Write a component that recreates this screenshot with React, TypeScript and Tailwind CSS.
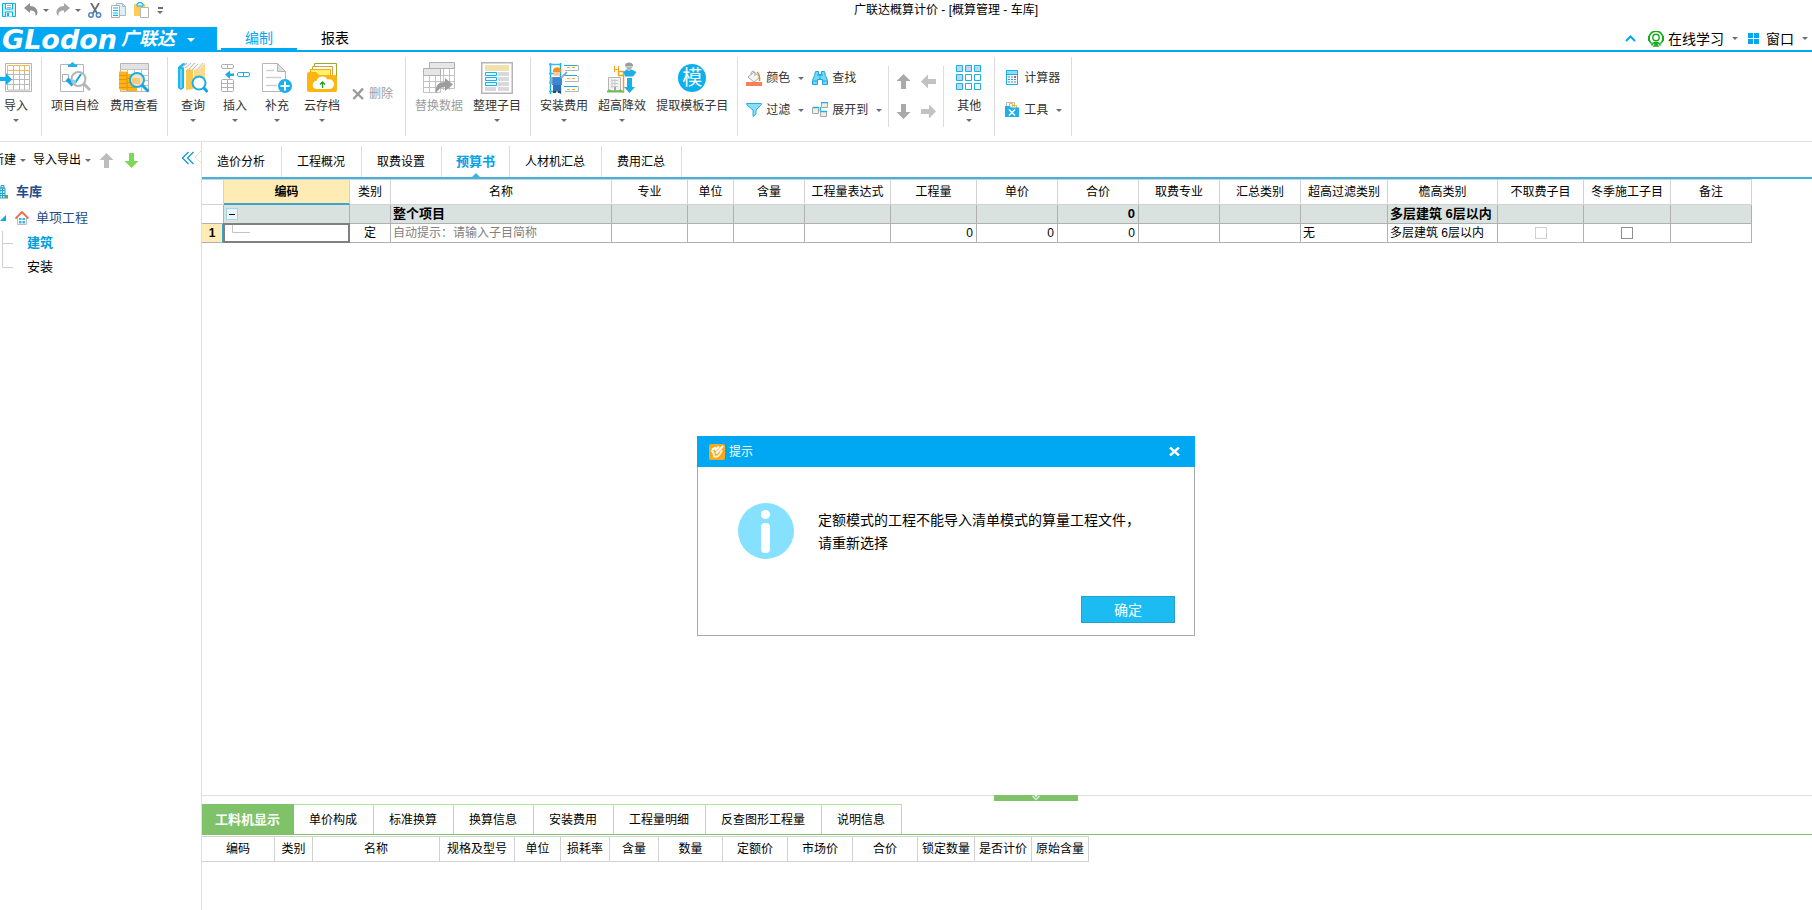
import React from 'react';
import clsx from 'clsx';

type ArtProps = { w: number; h: number; children: React.ReactNode };

function Art({ w, h, children }: ArtProps) {
  return (
    <svg width={w} height={h} viewBox={`0 0 ${w} ${h}`} fill="none" className="block shrink-0" aria-hidden="true">
      {children}
    </svg>
  );
}

function Caret({ className = 'text-[#6c6c7c]' }: { className?: string }) {
  return (
    <svg width="6" height="3" viewBox="0 0 6 3" className={clsx('block shrink-0', className)} aria-hidden="true">
      <path d="M0 0h6L3 3z" fill="currentColor" />
    </svg>
  );
}

/* ---------- quick access icons ---------- */

const SaveIcon = () => (
  <Art w={14} h={14}>
    <path d="M.5.5h13v13H.5z" fill="#c9effb" stroke="#0fb0e6" />
    <path d="M3.500 1v5h7V1M3.500 13.500V9h7v4.500" fill="#fff" stroke="#0fb0e6" />
    <path d="M5 2.500h4M5 4.500h4" stroke="#a9a9a9" />
    <path d="M5 10h2v3H5z" fill="#0fb0e6" />
  </Art>
);

const UndoIcon = () => (
  <Art w={14} h={14}>
    <path d="M0 5l6-5v3c5 0 7.500 3 7.500 6.500 0 2-1 3-2 3.500C12 9 10 7.500 6 7.500V10z" fill="#8f8f8f" />
  </Art>
);

const RedoIcon = () => (
  <Art w={14} h={14}>
    <path d="M14 5L8 0v3C3 3 .5 6 .5 9.500c0 2 1 3 2 3.500C2 9 4 7.500 8 7.500V10z" fill="#a6a6a6" />
  </Art>
);

const CutIcon = () => (
  <Art w={14} h={15}>
    <path d="M3 0l6.500 11M11 0L4.500 11" stroke="#6e6e6e" strokeWidth="1.800" />
    <circle cx="3" cy="12" r="2.200" stroke="#4b86c6" strokeWidth="1.500" />
    <circle cx="10.500" cy="12" r="2.200" stroke="#4b86c6" strokeWidth="1.500" />
  </Art>
);

const CopyIcon = () => (
  <Art w={15} h={15}>
    <path d="M5.500.5h6l3 3v9h-9z" fill="#d9f2fb" stroke="#b5b5b5" />
    <path d="M11.500.5v3h3" stroke="#b5b5b5" />
    <path d="M.5 2.500h8v12h-8z" fill="#fff" stroke="#b0b0b0" />
    <path d="M2 5h5M2 7.500h5M2 10h5M2 12.300h5" stroke="#12b2ea" strokeWidth="1.200" />
  </Art>
);

const PasteIcon = () => (
  <Art w={15} h={16}>
    <path d="M0 2h11v12H0z" fill="#ffce55" />
    <path d="M3 4V1.500h1.500V.5h3v1H9V4z" fill="#d5f1fb" stroke="#12b2ea" />
    <path d="M6.500 5.500h8v10h-8z" fill="#fff" stroke="#b5b5b5" />
  </Art>
);

/* ---------- large ribbon icons ---------- */

const ImportIcon = () => (
  <Art w={32} h={32}>
    <path d="M5.500 1.500h26v28h-26z" fill="#fff" stroke="#b5b5b5" />
    <path d="M7.500 8v20h22V8M13.500 8v20M19.500 8v20M24.500 8v20M7.500 12.500h22M7.500 17.500h22M7.500 22.500h22" stroke="#b9b9b9" />
    <path d="M7.500 3.500h22v5h-22zM13.500 3.500v5M19.500 3.500v5M24.500 3.500v5" stroke="#f5b955" />
    <path d="M0 15h6v-4l6 6.500L6 23v-4H0z" fill="#10b0ea" />
  </Art>
);

const SelfCheckIcon = () => (
  <Art w={32} h={32}>
    <path d="M1.500 2.500h23v27h-23z" fill="#fff" stroke="#b5b5b5" />
    <path d="M9 5V2.500h2.500C12-.5 15-.5 15.500 2.500H18V5z" fill="#18b4ea" />
    <path d="M3.500 12.500h6v7h-6z" stroke="#b0b0b0" />
    <path d="M8 17l6 6" stroke="#10a6e6" strokeWidth="4" />
    <circle cx="19.500" cy="17" r="7" fill="#fff" stroke="#b5b5b5" strokeWidth="2" />
    <path d="M25 22l6 6" stroke="#b5b5b5" strokeWidth="3" />
    <path d="M16 21l6-9" stroke="#10a6e6" strokeWidth="2" />
    <path d="M14 18l3 3" stroke="#7ccff0" strokeWidth="2" />
  </Art>
);

const CostViewIcon = () => (
  <Art w={32} h={32}>
    <path d="M2.500 1.500h28v28h-28z" fill="#fff" stroke="#b5b5b5" />
    <path d="M3 2h27v5H3z" fill="#e2e2e2" />
    <path d="M2.500 7.500h28M9.500 7v22M16.500 7v22M23.500 7v22M3 13.500h27M3 18.500h27M3 23.500h27" stroke="#c4c4c4" />
    <path d="M1 9.500h8v19H4l-3-1.500zM9 12h10v17H9z" fill="#fdb515" />
    <path d="M1 13.500h8M1 17.500h8M1 21.500h8M1 25.500h8M9 16.500h6M9 20.500h6M9 25.500h9M9 10v19" stroke="#e8930c" />
    <circle cx="19" cy="18" r="7" fill="#f9e3c8" stroke="#18b0e6" strokeWidth="2" />
    <path d="M14 16h8v6h-8z" fill="#fbc97c" />
    <path d="M24 23l6.500 6.500" stroke="#18a4de" strokeWidth="3" />
  </Art>
);

const QueryIcon = () => (
  <Art w={30} h={32}>
    <path d="M0 5l5-4 4 1-3 4v20l-3 2-3-2z" fill="#19b7ea" />
    <path d="M3 7v19" stroke="#c9effb" />
    <path d="M8 8l8-7 4 1-5 6v19l-7 1z" fill="#fbc84f" />
    <path d="M16 8l8-7h3v20l-11 6z" fill="#fdd98a" />
    <path d="M4 5l6-4 5 1-5 5zM10 7l7-6 4 1-6 6zM17 7l6-6 4 0-7 7z" fill="#f7f7f7" />
    <path d="M4 5l5-4M7 6l6-5M11 7l6-6M14 8l6-6M19 8l6-7" stroke="#bdbdbd" />
    <circle cx="21" cy="21" r="6.500" fill="#fff" stroke="#18b0e6" strokeWidth="2" />
    <path d="M25.500 25.500l4 4.500" stroke="#18a4de" strokeWidth="3" />
  </Art>
);

const InsertIcon = () => (
  <Art w={30} h={32}>
    <rect x="1.500" y="2.500" width="12" height="4" rx="1.500" stroke="#b0b0b0" />
    <path d="M7.500 2.500v4" stroke="#b0b0b0" />
    <rect x="17.500" y="10.500" width="12" height="4" rx="1.500" stroke="#16b2e8" />
    <path d="M23.500 10.500v4" stroke="#16b2e8" />
    <path d="M5 12.500l5-4v3h4v2.500h-4v3z" fill="#16aee6" />
    <rect x="1.500" y="17.500" width="12" height="12" rx="1" stroke="#b0b0b0" />
    <path d="M7.500 17.500v12M1.500 21.500h12M1.500 25.500h12" stroke="#b0b0b0" />
  </Art>
);

const SupplementIcon = () => (
  <Art w={30} h={32}>
    <path d="M.5 1.500h15l8 8v20H.5z" fill="#fff" stroke="#b5b5b5" />
    <path d="M15.500 1.500v8h8z" fill="#e0e0e0" stroke="#b5b5b5" />
    <path d="M4 8.500h8M4 15.500h15M4 23.500h11" stroke="#d0d0d0" strokeWidth="1.500" />
    <circle cx="23" cy="24" r="7" fill="#17b0ea" />
    <path d="M23 19.500v9M18.500 24h9" stroke="#fff" strokeWidth="2" />
  </Art>
);

const CloudIcon = () => (
  <Art w={36} h={32}>
    <path d="M10.500 1.500h22v14h-22z" fill="#fff" stroke="#8fae2b" />
    <path d="M8.500 4.500h20v11h-20z" fill="#fff" stroke="#d2a33c" />
    <path d="M6.500 7.500h20v10h-20z" fill="#fff36a" stroke="#f5a623" />
    <path d="M3 12q0-2 2-2h7l3 3h16q2 0 2 2v13q0 2-2 2H5q-2 0-2-2z" fill="#feb50f" />
    <path d="M13 27a4 4 0 01-.500-8 6 6 0 0111-1.500 4.800 4.800 0 013 9.500z" fill="#fff" />
    <path d="M18.500 26v-6M16 22.500l2.500-2.500 2.500 2.500" stroke="#1da01d" strokeWidth="1.300" />
  </Art>
);

const DeleteIcon = () => (
  <Art w={12} h={12}>
    <path d="M1 1.500L11 11M11 .5L1.500 11" stroke="#9a9a9a" strokeWidth="2.400" />
  </Art>
);

const ReplaceIcon = () => (
  <Art w={32} h={32}>
    <path d="M6.500 6.500v20h25v-20M14.500 6v22M20.500 6v22M26.500 6v22M6 13.500h25M6 19.500h25" stroke="#c2c2c2" />
    <path d="M6.500.5h25v6h-25z" fill="#e6e6e6" stroke="#b0b0b0" />
    <path d="M.5 13.500h17v17H.5z" fill="#fff" stroke="#c2c2c2" />
    <path d="M6.500 13v17M12.500 13v17M0 19.500h17M0 25.500h17" stroke="#c2c2c2" />
    <path d="M.5 6.500h17v7H.5z" fill="#e6e6e6" stroke="#b0b0b0" />
    <path d="M13 31c-1-8 3-11 9-11v-4l8 6.500-8 6.500v-4c-4 0-6 2-9 6z" fill="#9d9d9d" />
  </Art>
);

const ArrangeIcon = () => (
  <Art w={32} h={32}>
    <path d="M.75.75h30.500v30.500H.75z" fill="#fff" stroke="#b5b5b5" strokeWidth="1.500" />
    <path d="M4 3h24v6H4z" fill="#f3e2ae" />
    <path d="M17 10h11v4H17zM17 15h11v4H17zM17 20h11v4H17zM17 25h11v4H17zM4 25h11v4H4z" fill="#d9d8dc" />
    <path d="M4.500 10.500h11v3h-11zM4.500 15.500h11v3h-11zM4.500 20.500h11v3h-11z" fill="#e6f7fd" stroke="#16b2e8" />
  </Art>
);

const InstallIcon = () => (
  <Art w={32} h={32}>
    <path d="M2.500 1v31M12.500 1v31" stroke="#18aee2" strokeWidth="1.500" />
    <path d="M1 2.500h11M1 11.500h11M1 20.500h11M1 29.500h11" stroke="#35bde8" strokeWidth="1.500" />
    <path d="M16 3.500h13M16 13.500h13M16 24.500h13" stroke="#18aee2" />
    <path d="M29 3.500h1.500v5H17M29 14.500h1.500v5H17M29 24.500h1.500v5H17" stroke="#b5b5b5" />
    <path d="M19 5.500h3M24 5.500h3M19 16.500h3M24 16.500h3M19 27.500h3M24 27.500h3" stroke="#f5a623" />
    <path d="M5 9c0-5 8-5 8 0v1H5z" fill="#f5921f" />
    <path d="M6 10h6v4H6z" fill="#f9c9a0" />
    <path d="M4 15h10v8H4z" fill="#3b87d8" />
    <path d="M5 23h8v6H5z" fill="#2e70bd" />
    <path d="M13 16l6-6M3.500 15v7" stroke="#9dadba" strokeWidth="2" />
    <path d="M5 29h3v2H5zM10 29h3v2h-3z" fill="#444" />
  </Art>
);

const HeightIcon = () => (
  <Art w={32} h={32}>
    <path d="M8.500 4v6M12.500 4v6M8.500 7.500h4" stroke="#f5a01c" />
    <path d="M17.500 9v22M17.500 9.500h-5v4h5" stroke="#f5a01c" strokeWidth="1.500" />
    <path d="M2.500 15.500h12v13h-12z" fill="#f2f2f2" stroke="#b5b5b5" />
    <path d="M5 18.500h7M5 21.500h7M5 24.500h7M6 17v9M9 17v9" stroke="#cacaca" />
    <path d="M8 25h2v5H8z" fill="#a5a5a5" />
    <path d="M1 29q2-3 5 0zM12 29q2-3 5 0zM1 29h16v1.500H1z" fill="#6cbf4a" />
    <path d="M19 3.500c0-4 8-4 8 0v1h-8z" fill="#9c9c9c" />
    <path d="M20 5h6q-1 3.500-3 3.500T20 5z" fill="#b5b5b5" />
    <path d="M17.500 10l3-2.500L23 9l2.500-1.500 5 2.500-3.500 4.500h-8z" fill="#18aee8" />
    <path d="M21 16h5v9h3l-5.500 6-5.500-6h3z" fill="#18aee8" />
  </Art>
);

const TemplateIcon = () => (
  <span className="flex h-8 items-center">
    <span className="flex size-7 items-center justify-center rounded-full bg-[#0cb0ec] text-xl leading-5 text-white">模</span>
  </span>
);

const OtherIcon = () => (
  <Art w={26} h={26}>
    <path
      d="M.5.5h6v6h-6zM9.500.5h6v6h-6zM18.500.5h6v6h-6zM.5 9.500h6v6h-6zM.5 18.500h6v6h-6z"
      fill="#bcd8f0"
      stroke="#1bb1e4"
    />
    <path d="M9.500 9.500h6v6h-6zM18.500 9.500h6v6h-6zM9.500 18.500h6v6h-6zM18.500 18.500h6v6h-6z" fill="#fff" stroke="#1bb1e4" />
  </Art>
);

/* ---------- small ribbon icons ---------- */

const ColorIcon = () => (
  <Art w={16} h={16}>
    <path d="M2 7l6-5 6 5-6 5z" fill="#f4f4f4" stroke="#a8a8a8" />
    <path d="M5 5V2.500q2.500-3 4 0V6" stroke="#a8a8a8" />
    <path d="M11 2q3 2 2.500 9" stroke="#e58a22" strokeWidth="1.500" />
    <path d="M0 12h16v4H0z" fill="#fa7e58" />
  </Art>
);

const FilterIcon = () => (
  <Art w={16} h={16}>
    <path d="M.5 1.500h15v1L10 8v4l-3 2.500V8L.5 2.500z" fill="#8edcf6" stroke="#22b2e2" />
  </Art>
);

const FindIcon = () => (
  <Art w={16} h={16}>
    <path d="M3.500 1.500h3v3h3v-3h3l1 4 2 5v4h-5v-5h-5v5h-5v-4l2-5z" fill="#79d6f5" stroke="#19a8dc" />
    <path d="M5 5h6M8 5v4M1 11h4M11 11h4" stroke="#19a8dc" />
  </Art>
);

const ExpandIcon = () => (
  <Art w={16} h={16}>
    <path d="M.5 5.500h6v6h-6zM9.500.5h6v5h-6zM8.500 9.500h6v5h-6z" fill="#f3ece0" stroke="#a8a8a8" />
    <path d="M1 5.500h6M9 .5h7M8 9.500h7" stroke="#19b0e4" strokeWidth="1.500" />
    <path d="M7 8h2M8.500 8V5" stroke="#19b0e4" />
  </Art>
);

const CalcIcon = () => (
  <Art w={16} h={16}>
    <path d="M2.500.5h11v14h-11z" fill="#eefaff" stroke="#19aee4" />
    <path d="M3 1h10v3.500H3z" fill="#8bdcf6" />
    <path d="M3 4.500h10" stroke="#19aee4" />
    <path d="M4 7h2M7 7h2M4 9.500h2M7 9.500h2M10 9.500h2M4 12h2M7 12h2M10 12h2" stroke="#4c8fc7" />
    <path d="M10 7h2" stroke="#f04b3c" strokeWidth="2" />
  </Art>
);

const ToolIcon = () => (
  <Art w={16} h={16}>
    <path d="M2.500 5V.5h8V5" fill="#fff" stroke="#bdbdbd" />
    <path d="M5.500 5V1.500h3V5M9 3.500h3.500V6" stroke="#f0b53c" />
    <path d="M1 4h5l1 1.500h8V15H1z" fill="#1fb0ec" />
    <path d="M5 7.500l6 6M11 7.500l-6 6" stroke="#fff" strokeWidth="1.500" />
  </Art>
);

const arrowTurns = {
  up: '',
  down: 'rotate-180',
  left: '-rotate-90',
  right: 'rotate-90',
};

function BlockArrow({ dir, className = 'text-[#a9a9a9]' }: { dir: keyof typeof arrowTurns; className?: string }) {
  return (
    <svg width="15" height="15" viewBox="0 0 15 15" className={clsx('block', arrowTurns[dir], className)} aria-hidden="true">
      <path d="M7.500 0L14.500 7H10v8H5V7H.5z" fill="currentColor" />
    </svg>
  );
}

/* ---------- ribbon pieces ---------- */

type BigButtonProps = { icon: React.ReactNode; label: string; menu?: boolean; disabled?: boolean };

function BigButton({ icon, label, menu, disabled }: BigButtonProps) {
  return (
    <button
      type="button"
      disabled={disabled}
      className={clsx('flex flex-col items-center pt-[5px]', disabled ? 'text-[#9c9c9c]' : 'text-[#333]')}
    >
      {icon}
      <span className="mt-1 mb-[5px] leading-4 whitespace-nowrap">{label}</span>
      {menu && <Caret />}
    </button>
  );
}

function SmallButton({ icon, label, menu }: BigButtonProps) {
  return (
    <button type="button" className="flex h-8 items-center gap-1 text-[#333]">
      {icon}
      <span className="leading-4 whitespace-nowrap">{label}</span>
      {menu && (
        <span className="pl-1">
          <Caret />
        </span>
      )}
    </button>
  );
}

function Group({ className, children }: { className?: string; children: React.ReactNode }) {
  return <div className={clsx('flex h-[79px] shrink-0 items-start border-r border-[#dcdcdc]', className)}>{children}</div>;
}

function Ribbon() {
  return (
    <div className="flex h-[90px] shrink-0 border-b border-[#dfdfdf] pt-[5px]">
      <Group className="pr-[9px]">
        <BigButton icon={<ImportIcon />} label="导入" menu />
      </Group>
      <Group className="gap-[11px] px-[9px]">
        <BigButton icon={<SelfCheckIcon />} label="项目自检" />
        <BigButton icon={<CostViewIcon />} label="费用查看" />
      </Group>
      <Group className="gap-3 pr-3 pl-[10px]">
        <BigButton icon={<QueryIcon />} label="查询" menu />
        <BigButton icon={<InsertIcon />} label="插入" menu />
        <BigButton icon={<SupplementIcon />} label="补充" menu />
        <BigButton icon={<CloudIcon />} label="云存档" menu />
        <button type="button" disabled className="flex h-[74px] items-center gap-[5px] text-[#9c9c9c]">
          <DeleteIcon />
          <span className="leading-4">删除</span>
        </button>
      </Group>
      <Group className="gap-[10px] px-[9px]">
        <BigButton icon={<ReplaceIcon />} label="替换数据" disabled />
        <BigButton icon={<ArrangeIcon />} label="整理子目" menu />
      </Group>
      <Group className="gap-[10px] px-[9px]">
        <BigButton icon={<InstallIcon />} label="安装费用" menu />
        <BigButton icon={<HeightIcon />} label="超高降效" menu />
        <BigButton icon={<TemplateIcon />} label="提取模板子目" />
      </Group>
      <Group className="pl-2">
        <div className="grid grid-cols-[66px_76px] pt-[5px]">
          <SmallButton icon={<ColorIcon />} label="颜色" menu />
          <SmallButton icon={<FindIcon />} label="查找" />
          <SmallButton icon={<FilterIcon />} label="过滤" menu />
          <SmallButton icon={<ExpandIcon />} label="展开到" menu />
        </div>
        <div className="mt-[9px] grid h-[61px] grid-cols-[25px_25px] grid-rows-2 place-items-center border-x border-[#dcdcdc] px-[2px]">
          <button type="button" aria-label="上移"><BlockArrow dir="up" /></button>
          <button type="button" aria-label="左移"><BlockArrow dir="left" className="text-[#c2c2c2]" /></button>
          <button type="button" aria-label="下移"><BlockArrow dir="down" /></button>
          <button type="button" aria-label="右移"><BlockArrow dir="right" className="text-[#c2c2c2]" /></button>
        </div>
        <div className="px-3">
          <BigButton icon={<span className="flex h-8 items-center"><OtherIcon /></span>} label="其他" menu />
        </div>
      </Group>
      <Group className="px-[9px]">
        <div className="grid pt-[5px]">
          <SmallButton icon={<CalcIcon />} label="计算器" />
          <SmallButton icon={<ToolIcon />} label="工具" menu />
        </div>
      </Group>
    </div>
  );
}

/* ---------- header ---------- */

function TitleBar() {
  return (
    <header className="relative flex h-[27px] shrink-0 items-start pt-[2px]">
      <div className="flex h-4 items-center pl-[2px]">
        <button type="button" aria-label="保存"><SaveIcon /></button>
        <button type="button" aria-label="撤销" className="ml-2 flex items-center gap-[5px]"><UndoIcon /><Caret /></button>
        <button type="button" aria-label="恢复" className="ml-[7px] flex items-center gap-[5px]"><RedoIcon /><Caret /></button>
        <button type="button" aria-label="剪切" className="ml-[7px]"><CutIcon /></button>
        <button type="button" aria-label="复制" className="ml-[9px]"><CopyIcon /></button>
        <button type="button" aria-label="粘贴" className="ml-2"><PasteIcon /></button>
        <button type="button" aria-label="自定义" className="ml-2 flex flex-col items-center gap-[2px]">
          <span className="h-[2px] w-[5px] bg-[#6c6c7c]" />
          <Caret />
        </button>
      </div>
      <h1 className="absolute top-[2px] right-0 left-20 text-center leading-4">广联达概算计价 - [概算管理 - 车库]</h1>
    </header>
  );
}

function BrandBar() {
  return (
    <nav className="flex h-[25px] shrink-0 border-b-2 border-[#00a8f3] text-sm">
      <button type="button" className="-mb-[2px] flex w-[217px] items-center bg-[#00a8f3] pl-[2px] whitespace-nowrap text-white">
        <span className="font-['DejaVu_Sans',sans-serif] text-[27px] leading-[25px] font-bold italic">GLodon</span>
        <span className="ml-1 text-lg leading-[25px] font-bold italic">广联达</span>
        <svg width="8" height="4" viewBox="0 0 8 4" className="ml-3" aria-hidden="true">
          <path d="M0 0h8L4 4z" fill="currentColor" />
        </svg>
      </button>
      <a href="#edit" className="ml-1 w-[76px] border-b-2 border-[#00a8f3] text-center leading-[22px] text-[#00a8f3]">编制</a>
      <a href="#report" className="w-[76px] text-center leading-[22px] text-black">报表</a>
      <div className="ml-auto flex items-center pr-1">
        <button type="button" aria-label="收起功能区">
          <Art w={11} h={7}>
            <path d="M1 6l4.500-4.500L10 6" stroke="#00a8f3" strokeWidth="2" />
          </Art>
        </button>
        <button type="button" className="ml-3 flex items-center gap-1">
          <Art w={16} h={16}>
            <path d="M3.500 12.500A7 7 0 1112.500 12.500" stroke="#16ab1c" strokeWidth="1.600" />
            <circle cx="8" cy="6.500" r="3.200" stroke="#16ab1c" strokeWidth="1.400" />
            <path d="M3.500 14.500q1-3 4.500-3t4.500 3M8 12l2 3H6z" stroke="#16ab1c" strokeWidth="1.400" />
            <path d="M1 5v5M15 5v5" stroke="#16ab1c" strokeWidth="2" />
          </Art>
          <span className="leading-5">在线学习</span>
          <span className="pl-1"><Caret /></span>
        </button>
        <button type="button" className="ml-[10px] flex items-center gap-1">
          <Art w={11} h={11}>
            <path d="M0 0h5v5H0zM6 0h5v5H6zM0 6h5v5H0zM6 6h5v5H6z" fill="#00a8f3" />
          </Art>
          <span className="pl-[3px] leading-5">窗口</span>
          <span className="pl-1"><Caret /></span>
        </button>
      </div>
    </nav>
  );
}

/* ---------- project tree ---------- */

function Sidebar() {
  return (
    <aside className="relative w-[202px] shrink-0 overflow-hidden border-r border-[#dfdfdf]">
      <div className="flex h-9 items-center">
        <button type="button" className="-ml-2 flex items-center gap-1">新建<Caret /></button>
        <button type="button" className="ml-[7px] flex items-center gap-1">导入导出<Caret /></button>
        <button type="button" aria-label="上移" className="ml-2"><BlockArrow dir="up" className="text-[#bdbdbd]" /></button>
        <button type="button" aria-label="下移" className="ml-[10px]"><BlockArrow dir="down" className="text-[#7ed957]" /></button>
        <button type="button" aria-label="收起" className="mr-[7px] mb-1 ml-auto">
          <Art w={12} h={14}>
            <path d="M6.500 1l-6 6 6 6M11.500 1l-6 6 6 6" stroke="#1ba0cc" strokeWidth="1.400" />
          </Art>
        </button>
      </div>
      <svg width="7" height="12" viewBox="0 0 7 12" fill="none" className="absolute top-[9px] right-0" aria-hidden="true">
        <path d="M7 0L1 6l6 6" stroke="#e2e2e2" />
      </svg>
      <ul className="text-[13px]">
        <li className="flex h-[27px] items-center gap-2 font-bold text-[#1f4e8c]">
          <Art w={8} h={14}>
            <path d="M0 3h5v10H0zM1 .5h3V3H1z" fill="#d7f1fb" stroke="#2b9fd0" />
            <path d="M0 5.500h5M0 8.500h5M0 10.500h5M2.500 3v10" stroke="#2b9fd0" />
            <path d="M5 10h3v3.500H5z" fill="#49b53c" />
          </Art>
          车库
        </li>
        <li className="flex h-[26px] items-center text-[#1f4e8c]">
          <Art w={6} h={6}>
            <path d="M6 0v6H0z" fill="#10a6ea" />
          </Art>
          <span className="mr-[7px] ml-[9px]">
            <Art w={14} h={14}>
              <path d="M2.500 7v6.500h9V7" fill="#fff" stroke="#bdbdbd" />
              <path d="M4 7h2.500v2H4zM7.500 7H10v2H7.500zM4 10h2.500v2.500H4zM7.500 10H10v2.500H7.500z" fill="#35b5e8" />
              <path d="M.5 7.500L7 1l6.500 6.500" stroke="#f0694a" strokeWidth="1.800" />
            </Art>
          </span>
          单项工程
        </li>
        <li className="flex h-6 items-center gap-[13px] font-bold text-[#00a0dc]">
          <Art w={14} h={24}>
            <path d="M2.500 0v24M2.500 12.500H13" stroke="#cfcfcf" />
          </Art>
          建筑
        </li>
        <li className="flex h-6 items-center gap-[13px]">
          <Art w={14} h={24}>
            <path d="M2.500 0v12.500H13" stroke="#cfcfcf" />
          </Art>
          安装
        </li>
      </ul>
    </aside>
  );
}

/* ---------- budget table ---------- */

const pageTabs = ['造价分析', '工程概况', '取费设置', '预算书', '人材机汇总', '费用汇总'];

const columns = [
  { title: '', width: 'w-[22px]' },
  { title: '编码', width: 'w-[126px]' },
  { title: '类别', width: 'w-[41px]' },
  { title: '名称', width: 'w-[221px]' },
  { title: '专业', width: 'w-[76px]' },
  { title: '单位', width: 'w-[46px]' },
  { title: '含量', width: 'w-[71px]' },
  { title: '工程量表达式', width: 'w-[86px]' },
  { title: '工程量', width: 'w-[86px]' },
  { title: '单价', width: 'w-[81px]' },
  { title: '合价', width: 'w-[81px]' },
  { title: '取费专业', width: 'w-[81px]' },
  { title: '汇总类别', width: 'w-[81px]' },
  { title: '超高过滤类别', width: 'w-[87px]' },
  { title: '檐高类别', width: 'w-[110px]' },
  { title: '不取费子目', width: 'w-[86px]' },
  { title: '冬季施工子目', width: 'w-[87px]' },
  { title: '备注', width: 'w-[81px]' },
];

function Td({ className, children }: { className?: string; children?: React.ReactNode }) {
  return (
    <td className={clsx('h-[19px] border-r border-b border-[#b0b0b0] p-0 leading-[18px] whitespace-nowrap', className)}>
      {children}
    </td>
  );
}

function BudgetTable() {
  return (
    <table className="w-[1550px] table-fixed border-separate border-spacing-0">
      <thead>
        <tr>
          {columns.map((col) => (
            <th
              key={col.title}
              className={clsx(
                'h-[26px] border-t border-r border-[#d2d2d2] p-0 whitespace-nowrap',
                col.width,
                col.title === '编码' ? 'border-b-2 border-b-[#3aa6d0] bg-[#ffecb5] font-bold' : 'border-b font-normal',
              )}
            >
              {col.title}
            </th>
          ))}
        </tr>
      </thead>
      <tbody>
        <tr className="bg-[#d9e2de] text-[13px] font-bold">
          <Td className="bg-white" />
          <Td>
            <button type="button" aria-label="折叠" className="ml-[2px] flex size-3 items-center justify-center border border-[#a5d5e8] bg-[#eaf5fa]">
              <span className="h-px w-[6px] bg-black" />
            </button>
          </Td>
          <Td />
          <Td className="pl-[2px]">整个项目</Td>
          <Td /><Td /><Td /><Td /><Td /><Td />
          <Td className="pr-[3px] text-right">0</Td>
          <Td /><Td /><Td />
          <Td className="pl-[2px]">多层建筑 6层以内</Td>
          <Td /><Td /><Td />
        </tr>
        <tr>
          <Td className="border-r-2 border-r-[#3aa6d0] bg-[#ffecb5] text-center font-bold">1</Td>
          <Td>
            <span className="relative block h-[18px] outline-2 -outline-offset-1 outline-[#808080]">
              <input aria-label="编码" className="block h-full w-full bg-transparent pl-7" />
              <svg width="18" height="9" viewBox="0 0 18 9" fill="none" className="absolute top-[1px] left-2" aria-hidden="true">
                <path d="M.5 0v7.500H18" stroke="#c4c4c4" />
              </svg>
            </span>
          </Td>
          <Td className="text-center">定</Td>
          <Td className="pl-[2px] text-[#7f7f7f]">自动提示：请输入子目简称</Td>
          <Td /><Td /><Td /><Td />
          <Td className="pr-[3px] text-right">0</Td>
          <Td className="pr-[3px] text-right">0</Td>
          <Td className="pr-[3px] text-right">0</Td>
          <Td /><Td />
          <Td className="pl-[2px]">无</Td>
          <Td className="pl-[2px]">多层建筑 6层以内</Td>
          <Td>
            <input type="checkbox" disabled aria-label="不取费子目" className="mx-auto block size-3 appearance-none border border-[#d0d0d0]" />
          </Td>
          <Td>
            <input type="checkbox" aria-label="冬季施工子目" className="mx-auto block size-3 appearance-none border border-[#8f8f8f]" />
          </Td>
          <Td />
        </tr>
      </tbody>
    </table>
  );
}

function BudgetPane() {
  return (
    <section className="min-h-0 flex-1 overflow-hidden">
      <div role="tablist" className="flex h-[37px] border-b-2 border-[#41b3e0] pt-1">
        {pageTabs.map((tab) => {
          const active = tab === '预算书';
          return (
            <button
              key={tab}
              type="button"
              role="tab"
              aria-selected={active}
              className={clsx(
                'relative h-[31px] border-r border-[#dcdcdc]',
                active ? 'px-[14px] text-[13px] font-bold text-[#00a2ea]' : 'pr-4 pl-[15px]',
              )}
            >
              {tab}
              {active && (
                <svg width="8" height="4" viewBox="0 0 8 4" className="absolute bottom-0 left-[30px]" aria-hidden="true">
                  <path d="M0 4l4-4 4 4z" fill="#41b3e0" />
                </svg>
              )}
            </button>
          );
        })}
      </div>
      <BudgetTable />
    </section>
  );
}

/* ---------- detail pane ---------- */

const detailTabs = ['工料机显示', '单价构成', '标准换算', '换算信息', '安装费用', '工程量明细', '反查图形工程量', '说明信息'];

const detailColumns = [
  { title: '编码', width: 'w-[73px]' },
  { title: '类别', width: 'w-[38px]' },
  { title: '名称', width: 'w-[127px]' },
  { title: '规格及型号', width: 'w-[75px]' },
  { title: '单位', width: 'w-[46px]' },
  { title: '损耗率', width: 'w-[49px]' },
  { title: '含量', width: 'w-[49px]' },
  { title: '数量', width: 'w-[64px]' },
  { title: '定额价', width: 'w-[65px]' },
  { title: '市场价', width: 'w-[65px]' },
  { title: '合价', width: 'w-[65px]' },
  { title: '锁定数量', width: 'w-[57px]' },
  { title: '是否计价', width: 'w-[57px]' },
  { title: '原始含量', width: 'w-[57px]' },
];

function DetailPane() {
  return (
    <section className="relative h-[115px] shrink-0 border-t border-[#dfdfdf] pt-2">
      <button type="button" aria-label="收起明细" className="absolute -top-px left-1/2 -ml-[13px] flex h-[6px] w-[84px] justify-center bg-[#7fc269]">
        <Art w={10} h={6}>
          <path d="M1.500 1L5 4.500 8.500 1" stroke="#d9f0d2" strokeWidth="1.500" />
          <path d="M3 0h4L5 2z" fill="#fff" />
        </Art>
      </button>
      <div role="tablist" className="flex h-[31px] border-b border-[#7fc269]">
        {detailTabs.map((tab, i) => (
          <button
            key={tab}
            type="button"
            role="tab"
            aria-selected={i === 0}
            className={clsx(
              'border-t',
              i === 0
                ? 'border-[#7fc269] bg-[#7fc269] pr-[14px] pl-[13px] text-[13px] font-bold text-white'
                : 'border-r border-[#b2e39c] pr-4 pl-[15px]',
            )}
          >
            {tab}
          </button>
        ))}
      </div>
      <table className="mt-px w-[887px] table-fixed border-separate border-spacing-0">
        <thead>
          <tr>
            {detailColumns.map((col) => (
              <th key={col.title} className={clsx('h-[26px] border-y border-r border-[#d2d2d2] p-0 font-normal whitespace-nowrap', col.width)}>
                {col.title}
              </th>
            ))}
          </tr>
        </thead>
      </table>
    </section>
  );
}

/* ---------- message box ---------- */

function MessageDialog() {
  return (
    <div className="absolute top-[436px] right-0 left-20 flex justify-center">
      <div role="alertdialog" aria-labelledby="dialog-title" aria-describedby="dialog-text" className="w-[498px] border border-t-0 border-[#a9a9a9] bg-white">
        <div className="-mx-px flex h-[31px] items-center bg-[#00a8f3] pr-[15px] pl-3 text-white">
          <Art w={16} h={16}>
            <rect width="16" height="16" rx="2" fill="#fba81c" />
            <path d="M2 6.500q3 1 3 6 5 1.500 8-6.500" stroke="#fff3cf" strokeWidth="2" />
            <path d="M3 5.500l4-2M7 9.500L14 2M6 6.500l4-4" stroke="#fff" strokeWidth="2" />
          </Art>
          <h2 id="dialog-title" className="ml-1 leading-4">提示</h2>
          <button type="button" aria-label="关闭" className="ml-auto">
            <Art w={11} h={9}>
              <path d="M1 .5l9 8M10 .5l-9 8" stroke="#fff" strokeWidth="2.400" />
            </Art>
          </button>
        </div>
        <div className="flex gap-6 pt-9 pl-10">
          <Art w={56} h={56}>
            <circle cx="28" cy="28" r="28" fill="#85e1ff" />
            <circle cx="27.500" cy="11.500" r="4.500" fill="#fff" />
            <rect x="23" y="20" width="9" height="30" rx="4" fill="#fff" />
          </Art>
          <p id="dialog-text" className="pt-[6px] text-sm leading-[23px]">
            定额模式的工程不能导入清单模式的算量工程文件，
            <br />
            请重新选择
          </p>
        </div>
        <div className="flex justify-end pt-[37px] pr-[19px] pb-3">
          <button type="button" className="h-[27px] w-[94px] border border-[#2b9fcb] bg-[#1abcf2] text-sm text-white">确定</button>
        </div>
      </div>
    </div>
  );
}

export default function App() {
  return (
    <div className="relative flex h-screen flex-col overflow-hidden bg-white font-['Liberation_Sans','Noto_Sans_CJK_SC',sans-serif] text-xs text-black">
      <TitleBar />
      <BrandBar />
      <Ribbon />
      <div className="flex min-h-0 flex-1">
        <Sidebar />
        <main className="flex min-w-0 flex-1 flex-col">
          <BudgetPane />
          <DetailPane />
        </main>
      </div>
      <MessageDialog />
    </div>
  );
}
